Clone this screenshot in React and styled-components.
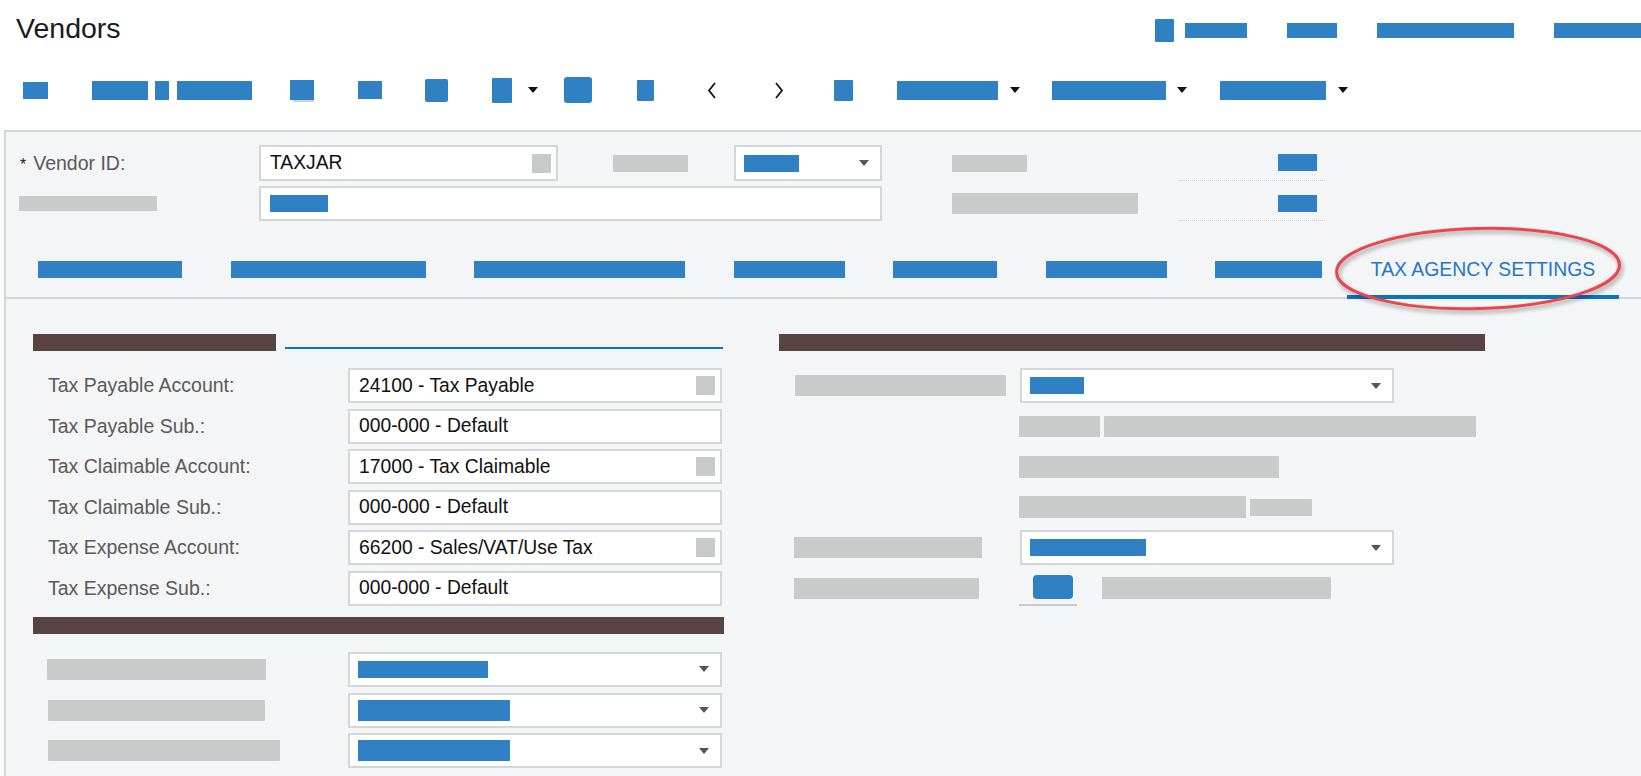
import React from "react";
import styled, { createGlobalStyle } from "styled-components";

const BLUE = "#3081c3";
const GRAY = "#c9cbca";
const BROWN = "#574343";
const BORDER = "#d5d6da";

const GlobalStyle = createGlobalStyle`
  html, body {
    margin: 0;
    padding: 0;
    background: #ffffff;
    overflow: hidden;
  }
  body {
    font-family: "Liberation Sans", Arial, sans-serif;
    color: #222;
  }
`;

const Page = styled.div`
  width: 1641px;
  white-space: nowrap;
`;

const TitleBar = styled.header`
  display: flex;
  align-items: center;
  height: 56px;
`;

const Title = styled.h1`
  flex: 0 0 1155px;
  box-sizing: border-box;
  margin: 0;
  padding-left: 16px;
  font-size: 28.5px;
  font-weight: normal;
  line-height: 1;
  color: #1b1b1b;
`;

const TopLinks = styled.nav`
  display: flex;
  align-items: center;
  margin-top: 5px;
`;

/* redacted blue text / icons */
const BlueBar = styled.span`
  flex: none;
  display: block;
  width: ${(p) => p.$w}px;
  height: ${(p) => p.$h || 17}px;
  margin-left: ${(p) => p.$ml || 0}px;
  background: ${BLUE};
  border-radius: ${(p) => p.$r || 0}px;
`;

/* redacted gray labels */
const GrayBar = styled.span`
  flex: none;
  display: block;
  width: ${(p) => p.$w}px;
  height: ${(p) => p.$h || 21}px;
  margin-left: ${(p) => p.$ml || 0}px;
  background: ${GRAY};
  border-radius: 1px;
`;

const Toolbar = styled.div`
  display: flex;
  align-items: center;
  height: 68px;
  padding-left: 23px;
`;

const ToolButton = styled(BlueBar)`
  position: relative;
  &::after {
    content: "";
    display: ${(p) => (p.$under ? "block" : "none")};
    position: absolute;
    left: 3px;
    right: 0;
    bottom: -2px;
    height: 2px;
    background: #d0d0d0;
  }
`;

const Caret = styled.span`
  flex: none;
  margin-left: ${(p) => p.$ml || 0}px;
  width: 0;
  height: 0;
  border-left: 5px solid transparent;
  border-right: 5px solid transparent;
  border-top: 6px solid ${(p) => p.$color || "#111"};
`;

const NavArrow = styled.svg`
  flex: none;
  margin-left: ${(p) => p.$ml}px;
`;

const Panel = styled.section`
  margin: 6px 0 0 4px;
  border-left: 2px solid ${BORDER};
  border-top: 2px solid ${BORDER};
  background: #f4f5f7;
  min-height: 660px;
`;

const SummaryGrid = styled.div`
  display: grid;
  grid-template-columns: 239px 299px 176px 148px 70px 227px 146px;
  grid-template-rows: 36px 35px;
  row-gap: 5px;
  align-items: center;
  padding: 13px 0 0 14px;
`;

const FieldLabel = styled.label`
  font-size: 19.5px;
  color: #5a5a5a;
  padding-left: ${(p) => p.$pl || 0}px;
`;

const Required = styled.span`
  color: #222;
  font-size: 16px;
  margin-right: 7px;
`;

const TextBox = styled.div`
  box-sizing: border-box;
  display: flex;
  align-items: center;
  height: ${(p) => p.$h || 35}px;
  width: ${(p) => (p.$w ? `${p.$w}px` : "100%")};
  grid-column: ${(p) => p.$span || "auto"};
  padding: 0 5px 0 9px;
  border: 2px solid ${BORDER};
  background: #fff;
  font-size: 19.3px;
  color: #111;
`;

const LookupSquare = styled.span`
  margin-left: auto;
  width: 19px;
  height: 19px;
  background: ${GRAY};
`;

const SelectBox = styled(TextBox)`
  padding: 0 11px 0 8px;
  justify-content: space-between;
`;

const InlineLabel = styled(GrayBar)`
  margin-left: 55px;
`;

const AsideLabel = styled(GrayBar)`
  grid-column: 6;
`;

const AsideValue = styled.div`
  box-sizing: border-box;
  height: 100%;
  display: flex;
  align-items: center;
  justify-content: flex-end;
  padding-right: 8px;
  border-bottom: 1px dotted #cfd0d3;
`;

const TabBar = styled.nav`
  display: flex;
  height: 55px;
  margin-top: 21px;
  padding-left: 8px;
  border-bottom: 2px solid ${BORDER};
`;

const Tab = styled.div`
  position: relative;
  display: flex;
  align-items: center;
  padding: 2px 24.25px 0;
  margin-bottom: -2px;
  border-bottom: 4px solid ${(p) => (p.$active ? "#0b72c4" : "transparent")};
  font-size: 19.4px;
  color: #1f77c9;
`;

const Annotation = styled.svg`
  position: absolute;
  left: -13px;
  top: -17px;
  overflow: visible;
  pointer-events: none;
  filter: drop-shadow(2px 3px 2px rgba(0, 0, 0, 0.35));
`;

const Content = styled.div`
  display: flex;
  align-items: flex-start;
  gap: 55px;
  padding: 35px 0 0 27px;
`;

const Column = styled.div`
  width: ${(p) => p.$w}px;
  display: flex;
  flex-direction: column;
`;

const SectionHeader = styled.div`
  display: flex;
  align-items: flex-end;
  height: 17px;
  margin-top: ${(p) => p.$mt || 0}px;
`;

const SectionTitle = styled.div`
  flex: ${(p) => (p.$w ? `0 0 ${p.$w}px` : "1")};
  height: 17px;
  background: ${BROWN};
`;

const SectionRule = styled.div`
  flex: 1;
  height: 2px;
  margin: 0 1px 2px 9px;
  background: #0b72c4;
`;

const FieldList = styled.div`
  display: flex;
  flex-direction: column;
  gap: 5.6px;
  margin-top: ${(p) => p.$mt || 17}px;
`;

const FieldRow = styled.div`
  display: grid;
  grid-template-columns: ${(p) => p.$label}px 374px 1fr;
  align-items: center;
  height: 35px;
`;

const FieldGroup = styled.div`
  display: flex;
  align-items: center;
  gap: ${(p) => p.$gap || 4}px;
  margin-left: -1px;
`;

const CheckLink = styled.div`
  box-sizing: border-box;
  display: flex;
  align-items: flex-start;
  width: 58px;
  height: 35px;
  padding: 4px 0 0 14px;
  border-bottom: 2px solid ${GRAY};
`;

const toolbarItems = [
  { type: "btn", w: 25, h: 17, ml: 0 },
  { type: "btn", w: 56, h: 19, ml: 44 },
  { type: "btn", w: 14, h: 19, ml: 7 },
  { type: "btn", w: 75, h: 19, ml: 8 },
  { type: "btn", w: 24, h: 20, ml: 38, under: true },
  { type: "btn", w: 24, h: 18, ml: 44 },
  { type: "btn", w: 23, h: 23, ml: 43, r: 2 },
  { type: "btn", w: 20, h: 25, ml: 44, r: 1 },
  { type: "caret", ml: 16 },
  { type: "btn", w: 28, h: 26, ml: 26, r: 3 },
  { type: "btn", w: 17, h: 21, ml: 45, r: 1 },
  { type: "prev", ml: 53 },
  { type: "next", ml: 57 },
  { type: "btn", w: 19, h: 21, ml: 50, r: 1 },
  { type: "btn", w: 101, h: 19, ml: 44 },
  { type: "caret", ml: 12 },
  { type: "btn", w: 114, h: 19, ml: 32 },
  { type: "caret", ml: 11 },
  { type: "btn", w: 106, h: 19, ml: 33 },
  { type: "caret", ml: 12 },
];

const tabs = [144, 195, 211, 111, 104, 121, 107];

const accounts = [
  { label: "Tax Payable Account:", value: "24100 - Tax Payable", lookup: true },
  { label: "Tax Payable Sub.:", value: "000-000 - Default" },
  { label: "Tax Claimable Account:", value: "17000 - Tax Claimable", lookup: true },
  { label: "Tax Claimable Sub.:", value: "000-000 - Default" },
  { label: "Tax Expense Account:", value: "66200 - Sales/VAT/Use Tax", lookup: true },
  { label: "Tax Expense Sub.:", value: "000-000 - Default" },
];

const periodFields = [
  { label: 219, ml: 14, value: 130, vh: 17 },
  { label: 217, ml: 15, value: 152, vh: 21 },
  { label: 232, ml: 15, value: 152, vh: 21 },
];

const ToolbarItem = ({ item }) => {
  if (item.type === "caret") return <Caret $ml={item.ml} />;
  if (item.type === "prev" || item.type === "next") {
    const points = item.type === "prev" ? "8,1 2,8.5 8,16" : "2,1 8,8.5 2,16";
    return (
      <NavArrow $ml={item.ml} width="10" height="17" viewBox="0 0 10 17">
        <polyline points={points} fill="none" stroke="#111" strokeWidth="1.8" />
      </NavArrow>
    );
  }
  return <ToolButton $w={item.w} $h={item.h} $ml={item.ml} $r={item.r} $under={item.under} />;
};

const App = () => {
  return (
    <Page>
      <GlobalStyle />
      <TitleBar>
        <Title>Vendors</Title>
        <TopLinks>
          <BlueBar $w={19} $h={23} $r={1} />
          <BlueBar $w={62} $h={15} $ml={11} />
          <BlueBar $w={50} $h={15} $ml={40} />
          <BlueBar $w={137} $h={15} $ml={40} />
          <BlueBar $w={100} $h={15} $ml={40} />
        </TopLinks>
      </TitleBar>

      <Toolbar>
        {toolbarItems.map((item, i) => (
          <ToolbarItem key={i} item={item} />
        ))}
      </Toolbar>

      <Panel>
        <SummaryGrid>
          <FieldLabel>
            <Required>*</Required>Vendor ID:
          </FieldLabel>
          <TextBox $h={36}>
            TAXJAR
            <LookupSquare />
          </TextBox>
          <InlineLabel $w={75} $h={17} />
          <SelectBox $h={36}>
            <BlueBar $w={55} $h={17} />
            <Caret $color="#555" />
          </SelectBox>
          <AsideLabel $w={75} $h={17} />
          <AsideValue>
            <BlueBar $w={39} $h={17} />
          </AsideValue>

          <GrayBar $w={138} $h={15} $ml={-1} />
          <TextBox $span="span 3">
            <BlueBar $w={58} $h={17} />
          </TextBox>
          <AsideLabel $w={186} $h={21} />
          <AsideValue>
            <BlueBar $w={39} $h={17} />
          </AsideValue>
        </SummaryGrid>

        <TabBar>
          {tabs.map((w, i) => (
            <Tab key={i}>
              <BlueBar $w={w} $h={17} />
            </Tab>
          ))}
          <Tab $active>
            TAX AGENCY SETTINGS
            <Annotation width="290" height="90" viewBox="0 0 290 90">
              <ellipse
                cx="144"
                cy="43.5"
                rx="141.5"
                ry="40"
                fill="none"
                stroke="#e9474c"
                strokeWidth="3"
                transform="rotate(-1.5 144 43.5)"
              />
            </Annotation>
          </Tab>
        </TabBar>

        <Content>
          <Column $w={691}>
            <SectionHeader>
              <SectionTitle $w={243} />
              <SectionRule />
            </SectionHeader>
            <FieldList>
              {accounts.map((a) => (
                <FieldRow key={a.label} $label={315}>
                  <FieldLabel $pl={15}>{a.label}</FieldLabel>
                  <TextBox>
                    {a.value}
                    {a.lookup && <LookupSquare />}
                  </TextBox>
                </FieldRow>
              ))}
            </FieldList>

            <SectionHeader $mt={11}>
              <SectionTitle />
            </SectionHeader>
            <FieldList $mt={18}>
              {periodFields.map((f, i) => (
                <FieldRow key={i} $label={315}>
                  <GrayBar $w={f.label} $ml={f.ml} />
                  <SelectBox>
                    <BlueBar $w={f.value} $h={f.vh} />
                    <Caret $color="#555" />
                  </SelectBox>
                </FieldRow>
              ))}
            </FieldList>
          </Column>

          <Column $w={706}>
            <SectionHeader>
              <SectionTitle />
            </SectionHeader>
            <FieldList>
              <FieldRow $label={241}>
                <GrayBar $w={211} $ml={16} />
                <SelectBox>
                  <BlueBar $w={54} $h={17} />
                  <Caret $color="#555" />
                </SelectBox>
              </FieldRow>
              <FieldRow $label={241}>
                <span />
                <FieldGroup>
                  <GrayBar $w={81} />
                  <GrayBar $w={372} />
                </FieldGroup>
              </FieldRow>
              <FieldRow $label={241}>
                <span />
                <FieldGroup>
                  <GrayBar $w={260} $h={22} />
                </FieldGroup>
              </FieldRow>
              <FieldRow $label={241}>
                <span />
                <FieldGroup>
                  <GrayBar $w={227} $h={22} />
                  <GrayBar $w={62} $h={17} />
                </FieldGroup>
              </FieldRow>
              <FieldRow $label={241}>
                <GrayBar $w={188} $ml={15} />
                <SelectBox>
                  <BlueBar $w={116} $h={17} />
                  <Caret $color="#555" />
                </SelectBox>
              </FieldRow>
              <FieldRow $label={241}>
                <GrayBar $w={185} $ml={15} />
                <FieldGroup $gap={25}>
                  <CheckLink>
                    <BlueBar $w={40} $h={24} $r={4} />
                  </CheckLink>
                  <GrayBar $w={229} $h={22} />
                </FieldGroup>
              </FieldRow>
            </FieldList>
          </Column>
        </Content>
      </Panel>
    </Page>
  );
};

export default App;
